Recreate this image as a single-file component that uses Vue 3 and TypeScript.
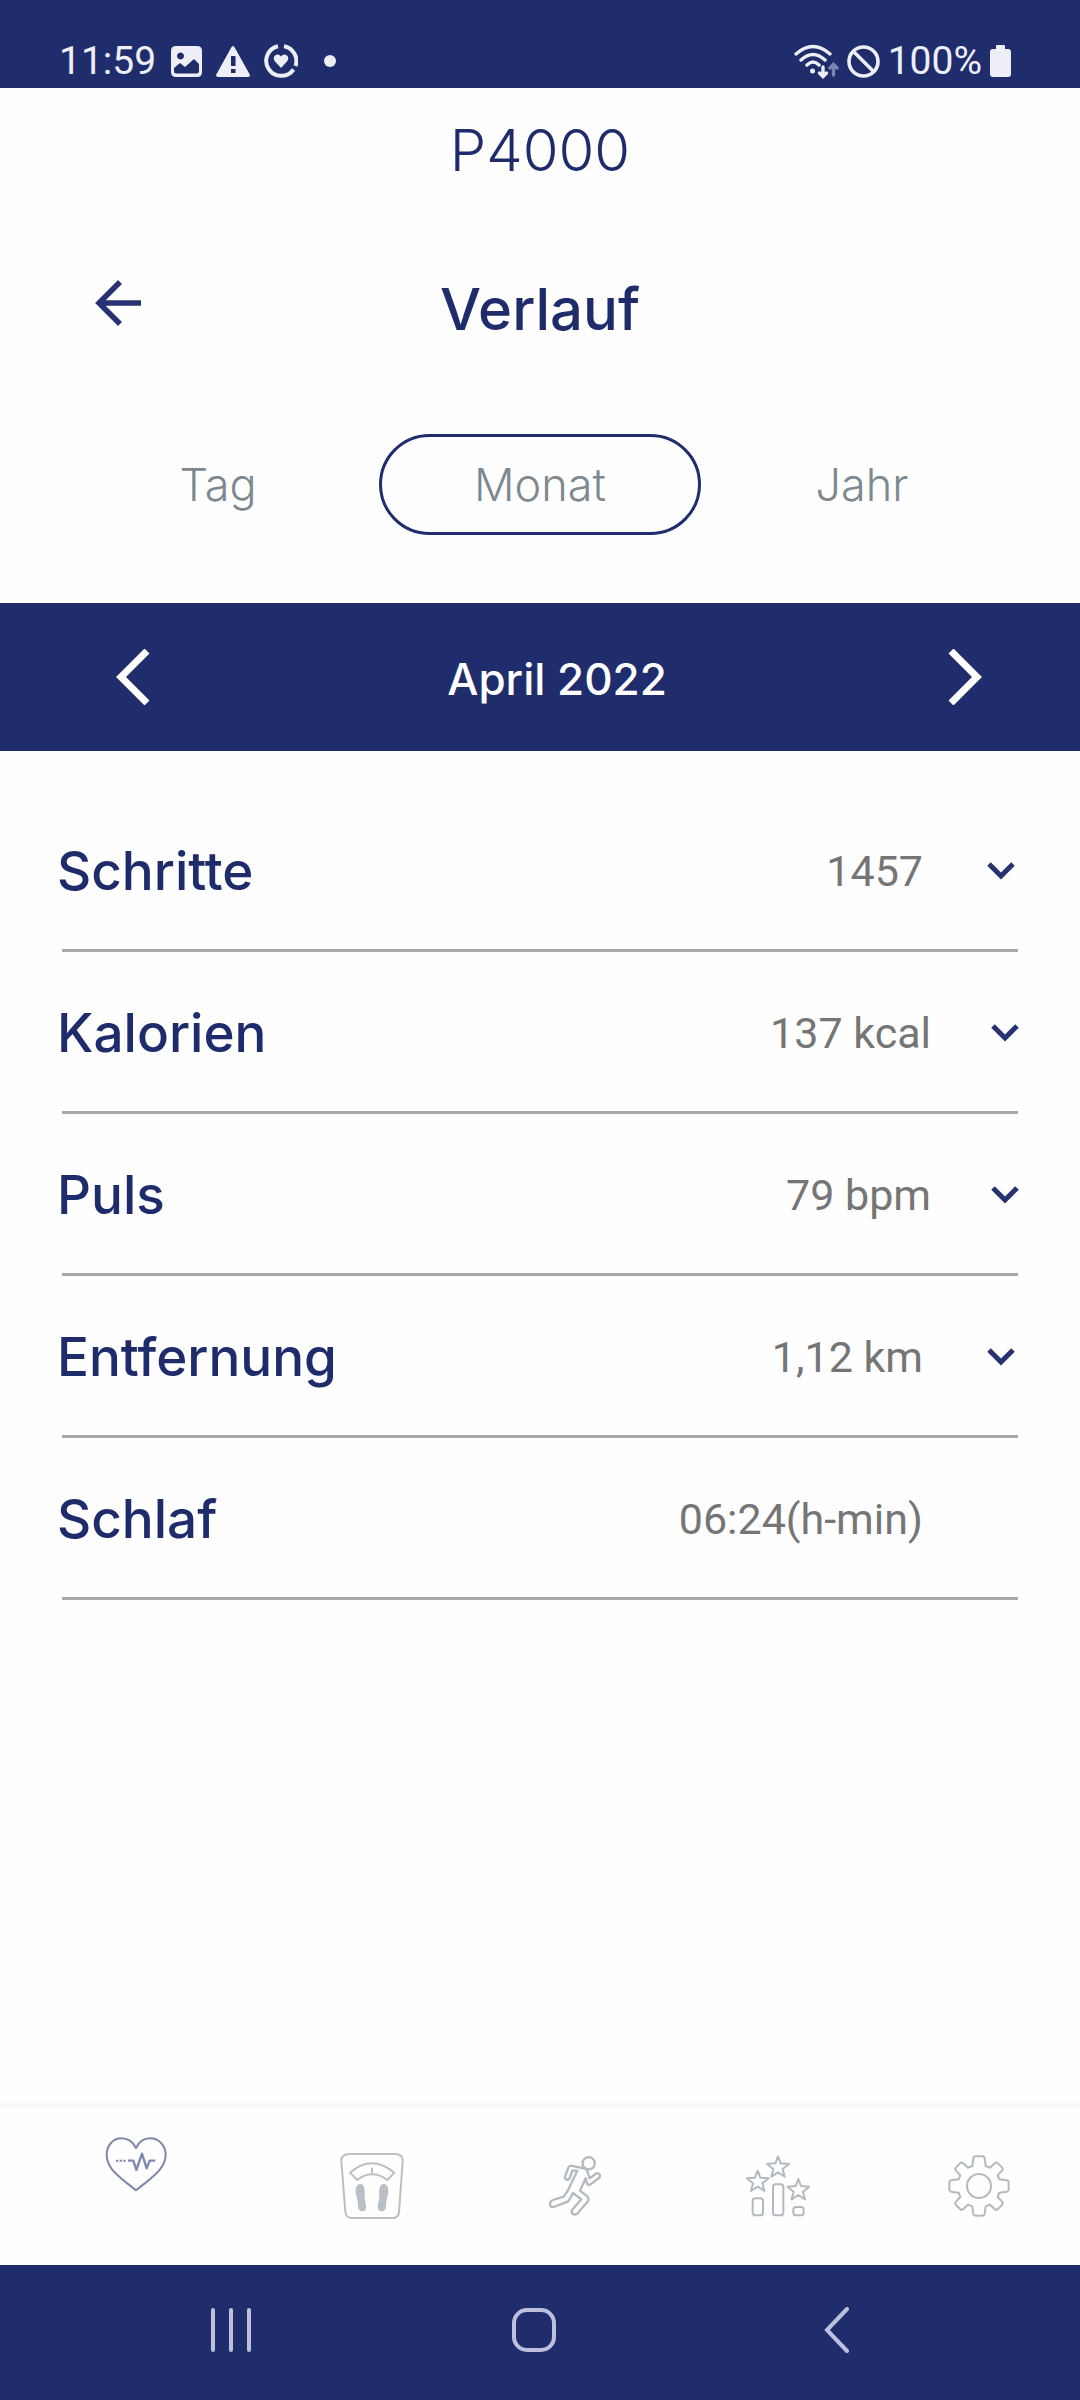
<script setup lang="ts">
import { ref } from 'vue'

interface Metric {
  label: string
  value: string
  expandable: boolean
  wide?: boolean
}

const periods: string[] = ['Tag', 'Monat', 'Jahr']
const period = ref<string>('Monat')

const metrics: Metric[] = [
  { label: 'Schritte', value: '1457', expandable: true },
  { label: 'Kalorien', value: '137 kcal', expandable: true, wide: true },
  { label: 'Puls', value: '79 bpm', expandable: true, wide: true },
  { label: 'Entfernung', value: '1,12 km', expandable: true },
  { label: 'Schlaf', value: '06:24(h-min)', expandable: false },
]
</script>

<template>
  <div class="screen">
    <div class="status">
      <span class="clock">11:59</span>
      <div class="notices">
        <svg width="31" height="31" viewBox="0 0 31 31">
          <path fill="#eeeff6" fill-rule="evenodd" d="M5 0H26Q31 0 31 5V26Q31 31 26 31H5Q0 31 0 26V5Q0 0 5 0ZM9.500 6.500a3.500 3.500 0 1 0 .01 0ZM3 22L9 17L14 21L23 13L28 18V25Q28 27.500 25.500 27.500H5.500Q3 27.500 3 25Z" />
        </svg>
        <svg width="34" height="31" viewBox="0 0 34 31">
          <path fill="#eeeff6" fill-rule="evenodd" d="M17 0Q18 0 19 2L34 29Q34 31 32 31H2Q0 31 0 29L15 2Q16 0 17 0ZM15 10V20H19.500V10ZM15 23V27H19.500V23Z" />
        </svg>
        <svg width="34" height="34" viewBox="0 0 34 34" fill="none">
          <path d="M20 2.200A15 15 0 0 1 31.500 22M29.500 25.500A15 15 0 1 1 14 2.200" stroke="#eeeff6" stroke-width="4" />
          <path d="M17 24L11 17.500Q8.500 14 11 11.500Q14.500 9 17 12.500Q19.500 9 23 11.500Q25.500 14 23 17.500Z" fill="#eeeff6" />
        </svg>
        <span class="more"></span>
      </div>
      <div class="signals">
        <svg width="45" height="35" viewBox="0 0 45 35" fill="none" stroke="#eeeff6" stroke-width="3.400" stroke-linecap="round">
          <path d="M2 10Q19 -5 36 10M7 16Q19 5 31 16M13 21Q19 15 25 21" />
          <path d="M29 23V32M25.500 29L29 32.500L32.500 29" />
          <path d="M39.500 31V21M36 24L39.500 20.500L43 24" stroke="#7c84b0" />
          <circle cx="18.500" cy="27" r="2.500" fill="#eeeff6" stroke="none" />
        </svg>
        <svg width="33" height="33" viewBox="0 0 33 33" fill="none" stroke="#eeeff6" stroke-width="3.600">
          <circle cx="16.500" cy="16.500" r="14.500" />
          <path d="M6.500 6.500L26.500 26.500" />
        </svg>
        <span class="charge">100%</span>
        <svg width="21" height="32" viewBox="0 0 21 32">
          <path fill="#eeeff6" d="M7 0H14Q15 0 15 1V4H18Q21 4 21 7V29Q21 32 18 32H3Q0 32 0 29V7Q0 4 3 4H6V1Q6 0 7 0Z" />
        </svg>
      </div>
    </div>

    <header class="device">P4000</header>

    <div class="heading">
      <button class="back" type="button" aria-label="Zurück">
        <svg width="46" height="46" viewBox="0 0 46 46" fill="none" stroke="#263272" stroke-width="5.500">
          <path d="M46 23H4M25 2L4 23L25 44" />
        </svg>
      </button>
      <h1>Verlauf</h1>
    </div>

    <div class="periods" role="tablist">
      <button
        v-for="name in periods"
        :key="name"
        type="button"
        role="tab"
        :aria-selected="period === name"
        :class="{ chosen: period === name }"
        @click="period = name"
      >{{ name }}</button>
    </div>

    <div class="month">
      <button class="prev" type="button" aria-label="Vorheriger Monat">
        <svg width="34" height="56" viewBox="0 0 34 56" fill="none" stroke="#fff" stroke-width="7">
          <path d="M31 2L5 28L31 54" />
        </svg>
      </button>
      <span>April 2022</span>
      <button class="next" type="button" aria-label="Nächster Monat">
        <svg width="34" height="56" viewBox="0 0 34 56" fill="none" stroke="#fff" stroke-width="7">
          <path d="M3 2L29 28L3 54" />
        </svg>
      </button>
    </div>

    <ul class="metrics">
      <li v-for="m in metrics" :key="m.label">
        <div class="row" :class="{ wide: m.wide }">
          <span class="label">{{ m.label }}</span>
          <span class="value">{{ m.value }}</span>
          <button v-if="m.expandable" type="button" :aria-label="m.label + ' anzeigen'">
            <svg width="28" height="18" viewBox="0 0 28 18" fill="none" stroke="#263272" stroke-width="5">
              <path d="M2 2L14 14L26 2" />
            </svg>
          </button>
          <span v-else class="blank"></span>
        </div>
      </li>
    </ul>

    <nav class="tabs">
      <button class="active" type="button" aria-label="Gesundheit">
        <svg width="62" height="56" viewBox="135 138 186 168" fill="none" stroke="#7f87ad" stroke-width="6" stroke-linejoin="round">
          <path d="M228 174C218 154 202 145 184 145C158 145 140 168 140 194C140 218 150 234 168 251C188 270 212 288 228 301C244 288 268 270 288 251C306 234 317 218 317 194C317 168 298 145 270 145C252 145 238 154 228 174Z" />
          <path d="M204 212H220L229 240L246 191L260 235L269 212H286" stroke-width="7" />
          <path d="M168 212H197" stroke-width="6" stroke-dasharray="7 4" />
        </svg>
      </button>
      <button type="button" aria-label="Gewicht">
        <svg width="64" height="66" viewBox="120 188 192 198" fill="none" stroke="#b9c0c5" stroke-width="6" stroke-linejoin="round">
          <path d="M145 191H288Q309 193 308 212L297 366Q295 383 278 383H154Q138 382 136 365L124 212Q123 194 145 191Z" />
          <path d="M150 247Q215 190 283 247L262 269Q216 235 172 269ZM216 232V250" />
          <path d="M180 281C168 282 165 298 168 313C172 328 174 334 174 346C174 358 180 363 187 363C195 363 199 356 198 346C198 334 193 332 194 318C196 297 193 280 180 281ZM252 281C264 282 267 298 264 313C260 328 258 334 258 346C258 358 252 363 245 363C237 363 233 356 234 346C234 334 239 332 238 318C236 297 239 280 252 281Z" fill="#b9c0c5" stroke="none" />
        </svg>
      </button>
      <button type="button" aria-label="Training">
        <svg width="52" height="60" viewBox="148 201 156 180" fill="none" stroke="#b3babf" stroke-width="7" stroke-linejoin="round">
          <circle cx="267" cy="223" r="18.500" />
          <path d="M257 239L213 230Q208 231 206 236L196 263C195 274 207 276 211 265L218 245L233 245L205 304L192 323L160 333C145 339 150 356 162 354L206 337L220 312L245 331L217 363C211 373 226 382 234 373L265 337Q269 330 263 322L241 305L258 268L262 284Q267 290 273 286L298 267C306 258 295 248 287 255L270 268L262 244Z" />
        </svg>
      </button>
      <button type="button" aria-label="Erfolge">
        <svg width="64" height="62" viewBox="137 194 192 186" fill="none" stroke="#b3babf" stroke-width="6" stroke-linejoin="round">
          <path d="M233 198L241 219L266 221L247 236L253 259L233 246L213 259L219 236L200 221L225 219Z" />
          <path d="M172 241L180 262L205 264L186 279L192 302L172 289L152 302L158 279L139 264L164 262Z" />
          <path d="M294 266L302 287L327 289L308 304L314 327L294 314L274 327L280 304L261 289L286 287Z" />
          <rect x="157" y="324" width="31" height="51" rx="8" />
          <rect x="218" y="282" width="31" height="93" rx="8" />
          <rect x="279" y="350" width="31" height="25" rx="8" />
        </svg>
      </button>
      <button type="button" aria-label="Einstellungen">
        <svg width="62" height="62" viewBox="173 193 186 186" fill="none" stroke="#b3babf" stroke-width="6" stroke-linejoin="round">
          <path d="M246 226L249 203Q250 197 256 197H276Q282 197 283 203L286 226L299 231L313 218Q318 213 323 218L335 230Q340 235 335 240L322 254L327 266L350 269Q355 270 355 276V296Q355 302 350 303L327 306L322 319L335 333Q340 338 335 343L323 355Q318 360 313 355L299 342L286 347L283 370Q282 375 276 375H256Q250 375 249 370L246 347L233 342L219 355Q214 360 209 355L197 343Q192 338 197 333L210 319L205 306L182 303Q177 302 177 296V276Q177 270 182 269L205 266L210 254L197 240Q192 235 197 230L209 218Q214 213 219 218L233 231Z" />
          <circle cx="266" cy="286" r="36" />
        </svg>
      </button>
    </nav>

    <div class="system">
      <button type="button" aria-label="Letzte Apps">
        <svg width="42" height="44" viewBox="0 0 42 44" stroke="#bcc0dc" stroke-width="4" stroke-linecap="round">
          <path d="M3 2V42M21 2V42M39 2V42" />
        </svg>
      </button>
      <button type="button" aria-label="Startseite">
        <svg width="46" height="46" viewBox="0 0 46 46" fill="none" stroke="#bcc0dc" stroke-width="4">
          <rect x="3" y="3" width="40" height="40" rx="13" />
        </svg>
      </button>
      <button type="button" aria-label="Zurück">
        <svg width="26" height="46" viewBox="0 0 26 46" fill="none" stroke="#bcc0dc" stroke-width="4" stroke-linecap="round">
          <path d="M23 2L3 23L23 44" />
        </svg>
      </button>
    </div>
  </div>
</template>

<style>
body {
  margin: 0;
}
</style>

<style scoped>
.screen {
  display: flex;
  flex-direction: column;
  min-height: 100vh;
  background: #fefefe;
  color: #1f2c6c;
  font-family: Inter, "Open Sans", sans-serif;
}

svg {
  display: block;
  flex: none;
}

button {
  display: flex;
  align-items: center;
  justify-content: center;
  margin: 0;
  padding: 0;
  border: 0;
  background: none;
  color: inherit;
  font: inherit;
  cursor: pointer;
}

.status {
  display: flex;
  align-items: center;
  box-sizing: border-box;
  height: 88px;
  padding: 34px 69px 0 59px;
  background: #202d6d;
  color: #eeeff6;
  font: 39px/48px Roboto, sans-serif;
}

.notices {
  display: flex;
  align-items: center;
  gap: 14px;
  margin-left: 15px;
}

.more {
  width: 12px;
  height: 12px;
  margin-left: 12px;
  border-radius: 50%;
  background: #eeeff6;
}

.signals {
  display: flex;
  align-items: center;
  gap: 8px;
  margin-left: auto;
}

.device {
  font-size: 58px;
  font-weight: 300;
  line-height: 124px;
  text-align: center;
}

.heading {
  display: grid;
  grid-template-columns: 1fr auto 1fr;
  align-items: center;
  height: 194px;
  padding: 0 95px;
}

.heading h1 {
  margin: 0;
  font-size: 58px;
  font-weight: 500;
  line-height: 72px;
}

.back {
  justify-self: start;
  padding-bottom: 12px;
}

.periods {
  display: grid;
  grid-template-columns: repeat(3, 1fr);
  padding: 28px 57px 68px;
}

.periods button {
  height: 101px;
  border: 3px solid transparent;
  border-radius: 51px;
  color: #7d888f;
  font-size: 45px;
  font-weight: 300;
}

.periods .chosen {
  border-color: #202d6d;
}

.month {
  display: flex;
  height: 148px;
  background: #202d6d;
  color: #fff;
  font-size: 44px;
  font-weight: 500;
  line-height: 152px;
}

.month span {
  flex: 1;
  text-align: center;
}

.prev {
  width: 265px;
}

.next {
  width: 231px;
}

.metrics {
  flex: 1;
  margin: 0;
  padding: 39px 57px;
  list-style: none;
}

.metrics li::after {
  content: "";
  display: block;
  height: 3px;
  margin: 0 5px;
  background: #a9a9a9;
}

.row {
  display: flex;
  align-items: center;
  box-sizing: border-box;
  height: 159px;
  padding: 2px 8px 0 0;
}

.row.wide {
  padding-right: 4px;
}

.label {
  flex: 1;
  font-size: 53px;
  font-weight: 500;
}

.value {
  margin-right: 64px;
  color: #757575;
  font: 43px/52px Roboto, sans-serif;
}

.wide .value {
  margin-right: 60px;
}

.blank {
  width: 28px;
}

.tabs {
  display: grid;
  grid-template-columns: 272fr 200fr 206fr 200fr 202fr;
  height: 158px;
  box-shadow: 0 0 10px rgba(0, 0, 0, 0.08);
}

.tabs .active {
  padding-bottom: 44px;
}

.system {
  display: grid;
  grid-template-columns: repeat(3, 1fr);
  height: 135px;
  padding: 0 92px 0 79px;
  background: #202d6d;
  z-index: 1;
}

.system button {
  padding-bottom: 6px;
}
</style>
